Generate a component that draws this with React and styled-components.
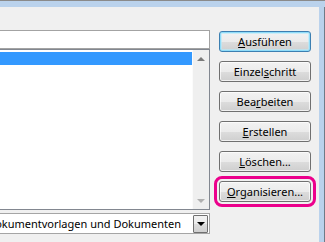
import React from "react";
import styled, { createGlobalStyle, css } from "styled-components";

const Global = createGlobalStyle`
  html, body { margin: 0; padding: 0; background: #f0f0f0; }
  body { font-family: "Noto Sans", "Open Sans", sans-serif; }
`;

const Window = styled.div`
  width: 325px;
  height: 242px;
  overflow: hidden;
  display: flex;
  flex-direction: column;
  background: #f0f0f0;
`;

const TitleStrip = styled.div`
  height: 6px;
  border-top: 1px solid #8a8a8a;
  background: #bad2ec;
  flex: none;
`;

const Body = styled.div`
  flex: 1;
  display: flex;
`;

const Client = styled.div`
  flex: 1;
  display: flex;
  align-items: flex-start;
  padding-top: 23px;
  background: #f0f0f0;
`;

const Frame = styled.div`
  width: 5px;
  background: #bad2ec;
  border-right: 1px solid #6f7b88;
  flex: none;
`;

const LeftColumn = styled.div`
  width: 210px;
  overflow: hidden;
  flex: none;
`;

const LeftInner = styled.div`
  width: 410px;
  margin-left: -200px;
  display: flex;
  flex-direction: column;
`;

const TextInput = styled.div`
  height: 19px;
  box-sizing: border-box;
  border: 1px solid #a3a3a3;
  background: #fff;
`;

const ListBox = styled.div`
  height: 161px;
  box-sizing: border-box;
  border: 1px solid #828790;
  background: #fff;
  display: flex;
`;

const Items = styled.div`
  flex: 1;
  padding: 2px 0 0 0;
`;

const Row = styled.div`
  height: 13px;
  background: ${(p) => (p.selected ? "#3399ff" : "transparent")};
`;

const ScrollBar = styled.div`
  width: 17px;
  display: flex;
  flex-direction: column;
  justify-content: space-between;
  background: #efefef;
  border-left: 1px solid #fbfbfb;
  box-sizing: border-box;
`;

const ScrollButton = styled.div`
  height: 17px;
  display: flex;
  align-items: center;
  justify-content: center;
`;

const Arrow = styled.div`
  width: 0;
  height: 0;
  border-left: 4px solid transparent;
  border-right: 4px solid transparent;
  ${(p) =>
    p.down
      ? css`border-top: 4px solid ${p.color};`
      : css`border-bottom: 4px solid ${p.color};`}
`;

const Combo = styled.div`
  margin-top: 3px;
  height: 21px;
  box-sizing: border-box;
  border: 1px solid #a5a5a5;
  background: #fff;
  display: flex;
  align-items: center;
  justify-content: flex-end;
  padding-right: 1px;
`;

const ComboText = styled.span`
  white-space: nowrap;
  font-size: 11px;
  color: #000;
  margin-right: 12px;
  flex: none;
`;

const DropButton = styled.div`
  width: 15px;
  height: 18px;
  box-sizing: border-box;
  border: 1px solid #707070;
  border-radius: 1px;
  background: linear-gradient(#f2f2f2 0%, #ebebeb 50%, #dddddd 51%, #cfcfcf 100%);
  display: flex;
  align-items: center;
  justify-content: center;
  flex: none;
`;

const ButtonColumn = styled.div`
  margin-left: 9px;
  margin-top: 1px;
  display: flex;
  flex-direction: column;
  gap: 9px;
  width: 92px;
`;

const Button = styled.div`
  height: 21px;
  box-sizing: border-box;
  border: 1px solid #707070;
  border-radius: 3px;
  background: linear-gradient(#f2f2f2 0%, #ebebeb 50%, #dddddd 51%, #cfcfcf 100%);
  box-shadow: inset 0 0 0 1px rgba(255, 255, 255, 0.7);
  display: flex;
  align-items: center;
  justify-content: center;
  font-size: 11px;
  color: #000;
  white-space: nowrap;
  ${(p) =>
    p.isDefault &&
    css`
      border-color: #3c7fb1;
      box-shadow: inset 0 0 0 1px #8fdcf9, inset 0 0 0 2px rgba(180, 235, 252, 0.6);
    `}
  ${(p) =>
    p.highlighted &&
    css`
      outline: 3px solid #ec008c;
      outline-offset: 2px;
    `}
`;

const buttons = [
  { pre: "", key: "A", post: "usführen", isDefault: true },
  { pre: "Einzel", key: "s", post: "chritt" },
  { pre: "Bea", key: "r", post: "beiten" },
  { pre: "", key: "E", post: "rstellen" },
  { pre: "", key: "L", post: "öschen..." },
  { pre: "", key: "O", post: "rganisieren...", highlighted: true },
];

export default function App() {
  return (
    <>
      <Global />
      <Window>
        <TitleStrip />
        <Body>
          <Client>
            <LeftColumn>
              <LeftInner>
                <TextInput />
                <ListBox>
                  <Items>
                    <Row selected />
                  </Items>
                  <ScrollBar>
                    <ScrollButton>
                      <Arrow color="#7a7a7a" />
                    </ScrollButton>
                    <ScrollButton>
                      <Arrow down color="#b0b0b0" />
                    </ScrollButton>
                  </ScrollBar>
                </ListBox>
                <Combo>
                  <ComboText>Alle aktiven Dokumentvorlagen und Dokumenten</ComboText>
                  <DropButton>
                    <Arrow down color="#000" />
                  </DropButton>
                </Combo>
              </LeftInner>
            </LeftColumn>
            <ButtonColumn>
              {buttons.map((b, i) => (
                <Button key={i} isDefault={b.isDefault} highlighted={b.highlighted}>
                  {b.pre}
                  <u>{b.key}</u>
                  {b.post}
                </Button>
              ))}
            </ButtonColumn>
          </Client>
          <Frame />
        </Body>
      </Window>
    </>
  );
}
